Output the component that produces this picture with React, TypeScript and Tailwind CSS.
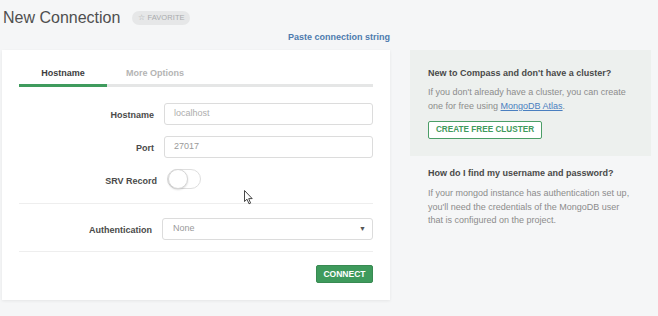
import React from "react";

const font = { fontFamily: '"Liberation Sans", Arial, sans-serif' };

function Row({ label, children, labelW = "w-[135px]", labelCls = "" }: { label: string; children: React.ReactNode; labelW?: string; labelCls?: string }) {
  return (
    <div className="flex items-center">
      <div className={`${labelW} ${labelCls} pt-[1px] text-right text-[9px] font-bold text-[#4a4a4a] leading-[12px]`}>{label}</div>
      <div className="ml-[10px] flex-1">{children}</div>
    </div>
  );
}

export default function App() {
  return (
    <div className="relative w-[658px] h-[316px] overflow-hidden bg-[#f5f6f7]" style={font}>
      {/* header */}
      <div className="flex items-center pl-[3px] pt-[8px] h-[28px]">
        <div className="text-[16px] leading-[20px] text-[#4f4f4f]">New Connection</div>
        <div className="ml-[12px] h-[14px] w-[58px] rounded-full bg-[#e6e7e8] flex items-center justify-center text-[7.5px] text-[#a9abad] tracking-[0.1px]">
          ☆ FAVORITE
        </div>
      </div>

      <div className="flex">
        {/* left column */}
        <div className="ml-[2px] w-[388px]">
          <div className="mt-[3px] h-[12px] leading-[12px] text-right text-[9px] font-bold text-[#4d7bae]">
            Paste connection string
          </div>
          <div className="mt-[7px] h-[250px] bg-white shadow-[0_1px_3px_rgba(0,0,0,0.07)] px-[17px] pt-[13px]">
            {/* tabs */}
            <div className="flex h-[21px] items-center text-[9px] font-bold">
              <div className="w-[88px] text-center text-[#3d3d3d]">Hostname</div>
              <div className="w-[96px] text-center text-[#b4b4b4]">More Options</div>
            </div>
            <div className="flex h-[3px] bg-[#e5e6e6]">
              <div className="w-[88px] bg-[#3f9b5d]" />
            </div>

            {/* form */}
            <div className="mt-[16px] flex flex-col">
              <Row label="Hostname">
                <div className="h-[22px] rounded-[3px] border border-[#dcdcdc] pl-[9px] flex items-center text-[9px] text-[#adadad]">
                  localhost
                </div>
              </Row>
              <div className="mt-[11px]">
                <Row label="Port">
                  <div className="h-[22px] rounded-[3px] border border-[#dcdcdc] pl-[9px] flex items-center text-[9px] text-[#9a9a9a]">
                    27017
                  </div>
                </Row>
              </div>
              <div className="mt-[11px]">
                <Row label="SRV Record" labelW="w-[138px]" labelCls="mt-[3px]">
                  <div className="h-[20px] w-[34px] rounded-full border border-[#dedede] bg-white relative">
                    <div className="absolute left-0 top-[-1px] h-[20px] w-[20px] rounded-full bg-white border border-[#d6d6d6] shadow-[0_1px_2px_rgba(0,0,0,0.15)]" />
                  </div>
                </Row>
              </div>
              <div className="mt-[14px] h-px bg-[#eeeeee]" />
              <div className="mt-[14px]">
                <Row label="Authentication" labelW="w-[133px]">
                  <div className="h-[22px] rounded-[3px] border border-[#dcdcdc] pl-[10px] pr-[6px] flex items-center justify-between text-[9px] text-[#9a9a9a]">
                    <span>None</span>
                    <span className="text-[7px] text-[#555]">▼</span>
                  </div>
                </Row>
              </div>
              <div className="mt-[11px] h-px bg-[#eeeeee]" />
              <div className="mt-[13px] flex justify-end">
                <div className="h-[18px] w-[57px] rounded-[2px] bg-[#3e9a5c] border border-[#388a52] flex items-center justify-center text-[8.5px] font-bold text-white">
                  CONNECT
                </div>
              </div>
            </div>
          </div>
        </div>

        {/* right column */}
        <div className="ml-[20px] w-[241px] mt-[22px]">
          <div className="h-[106px] bg-[#edf0ee] px-[18px] pt-[17px]">
            <div className="text-[9px] font-bold leading-[12px] text-[#494949]">New to Compass and don't have a cluster?</div>
            <div className="mt-[6px] text-[9px] leading-[14px] text-[#8c8c8c]">
              <div>If you don't already have a cluster, you can create</div>
              <div>
                one for free using <span className="text-[#4a7fc0] underline">MongoDB Atlas</span>.
              </div>
            </div>
            <div className="mt-[8px] inline-flex h-[18px] w-[114px] items-center justify-center rounded-[2px] border border-[#4b9e67] bg-white text-[8.2px] font-bold text-[#3f9a5c]">
              CREATE FREE CLUSTER
            </div>
          </div>
          <div className="px-[18px] pt-[11px]">
            <div className="text-[9px] font-bold leading-[12px] text-[#494949]">How do I find my username and password?</div>
            <div className="mt-[8px] text-[9px] leading-[13.5px] text-[#8c8c8c]">
              <div>If your mongod instance has authentication set up,</div>
              <div>you'll need the credentials of the MongoDB user</div>
              <div>that is configured on the project.</div>
            </div>
          </div>
        </div>
      </div>

      {/* mouse cursor */}
      <svg className="absolute left-[244px] top-[190px]" width="10" height="15" viewBox="0 0 10 15">
        <path d="M0.5 0.5 L0.5 11.5 L3 9.2 L5 13.8 L6.6 13.1 L4.7 8.6 L8.2 8.6 Z" fill="white" stroke="#333" strokeWidth="0.9" strokeLinejoin="round" />
      </svg>
    </div>
  );
}
